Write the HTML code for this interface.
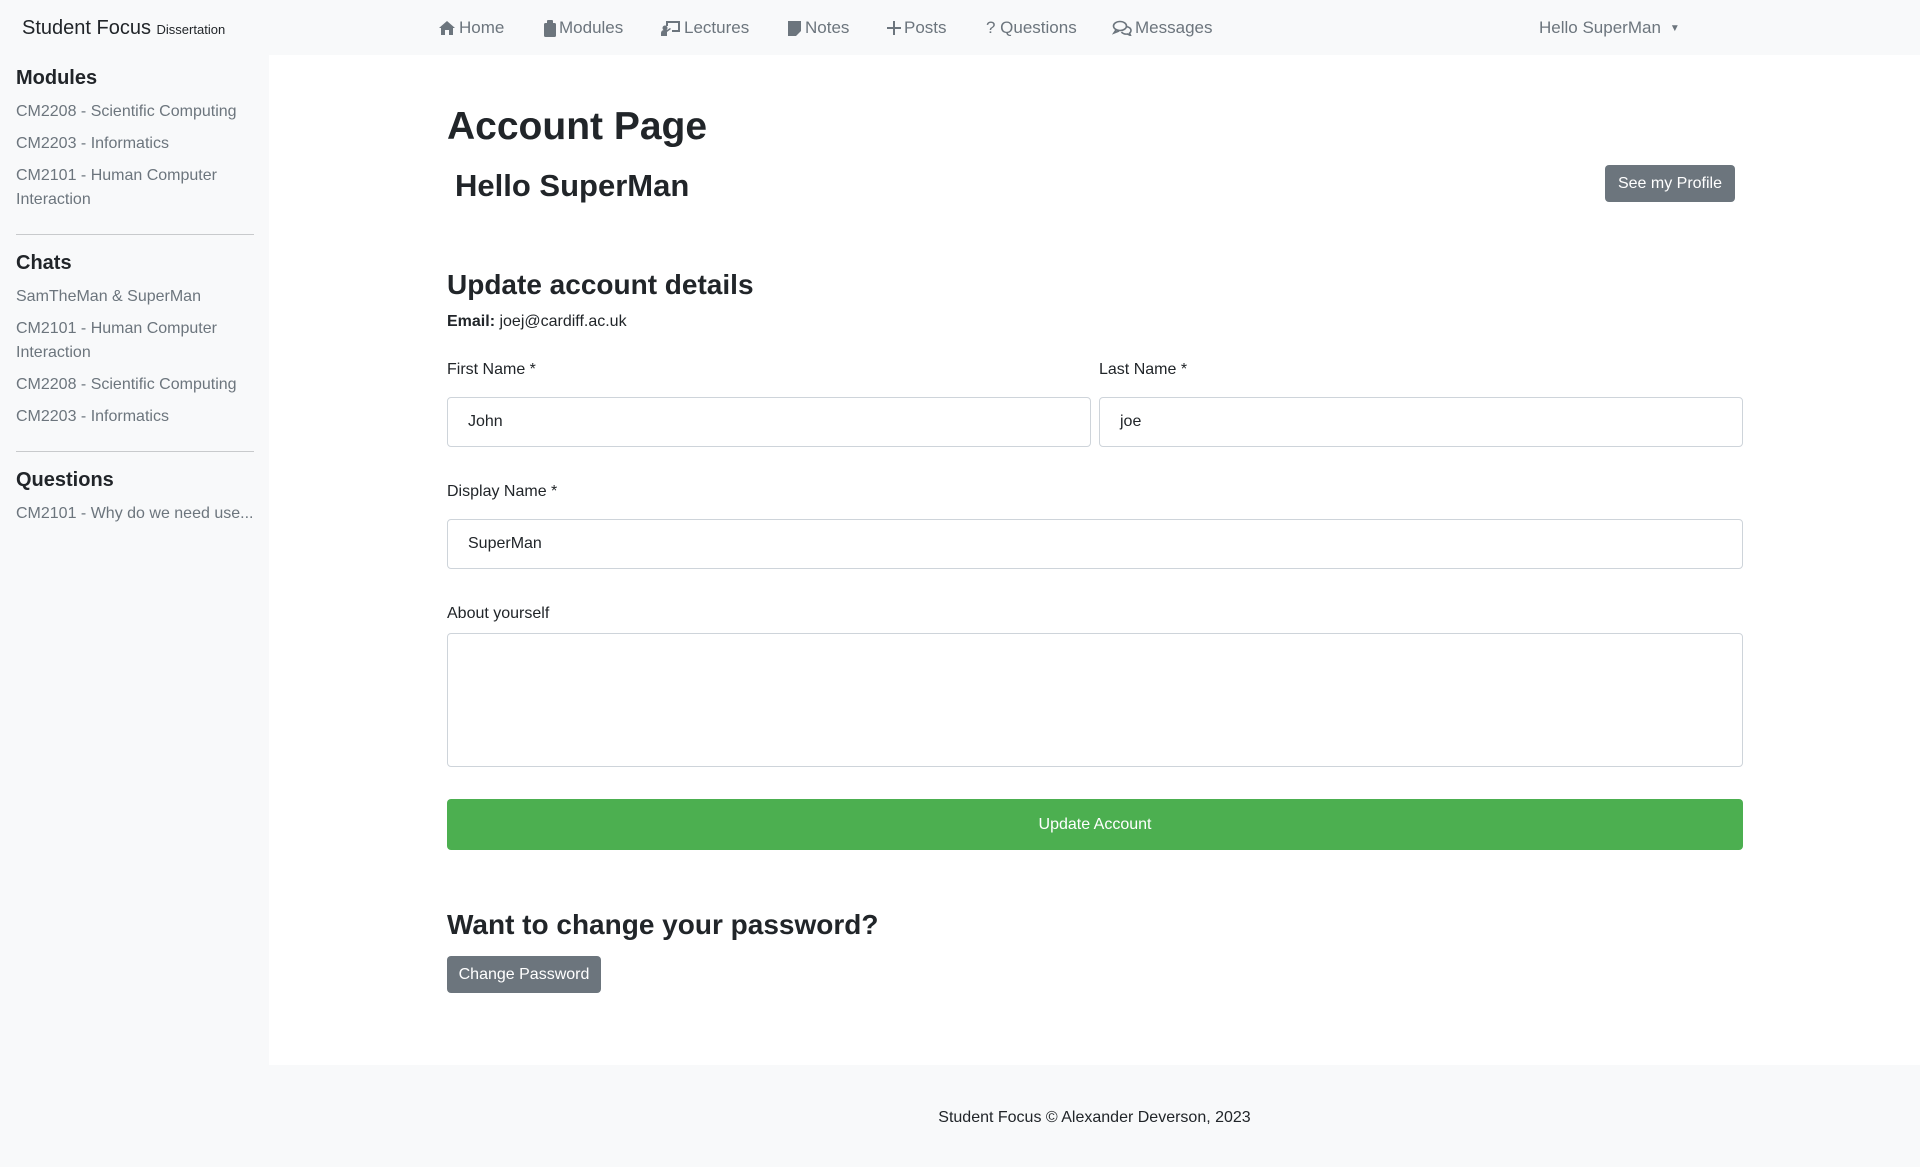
<!DOCTYPE html>
<html><head><meta charset="utf-8"><style>
*{box-sizing:border-box;margin:0;padding:0}
body{width:1920px;height:1167px;background:#f8f9fa;font-family:"Liberation Sans",sans-serif;color:#212529;position:relative;overflow:hidden}
.a{position:absolute;white-space:nowrap}
.nav{color:#6c757d;font-size:17px;top:18px;display:flex;align-items:center;gap:3px}
.nav svg{fill:#6c757d}
.sb{color:#6c757d;font-size:16px;left:16px;line-height:24px}
.sh{font-size:20px;font-weight:bold;left:16px;color:#212529}
.hr{position:absolute;left:16px;width:238px;height:1px;background:#c8cacc}
#main{position:absolute;left:269px;top:55px;width:1651px;height:1010px;background:#fff}
.lbl{font-size:16px;left:447px}
.inp{position:absolute;border:1px solid #ced4da;border-radius:4px;background:#fff;font-size:16px;padding-left:20px;display:flex;align-items:center}
.btn{position:absolute;background:#6c757d;color:#fff;border-radius:4px;font-size:16px;display:flex;align-items:center;justify-content:center}
.hd{font-weight:bold}
</style></head><body>
<div class="a" style="left:22px;top:17px;font-size:20px;color:#212529">Student Focus <span style="font-size:13px">Dissertation</span></div>
<div class="a nav" style="left:438px"><svg width="18" height="16" viewBox="0 0 18 16"><path d="M9 1L1 8h2v7h4v-5h4v5h4V8h2z"/></svg>Home</div>
<div class="a nav" style="left:544px"><svg width="12" height="17" viewBox="0 0 12 17"><rect x="0" y="3" width="12" height="14" rx="1.5"/><rect x="3" y="0" width="6" height="4" rx="1"/></svg>Modules</div>
<div class="a nav" style="left:661px"><svg width="20" height="16" viewBox="0 0 20 16"><path d="M5 1h14v11h-8v-2h6V3H7v3H5z"/><circle cx="4" cy="8" r="2.5"/><path d="M0 16v-3a3 3 0 013-3h3l3-2 1 1-4 3v4z"/></svg>Lectures</div>
<div class="a nav" style="left:787px"><svg width="15" height="16" viewBox="0 0 15 16"><path d="M1 1h13v10l-5 5H1z"/></svg>Notes</div>
<div class="a nav" style="left:887px"><svg width="14" height="14" viewBox="0 0 14 14"><path d="M6 0h2v6h6v2H8v6H6V8H0V6h6z"/></svg>Posts</div>
<div class="a nav" style="left:986px">? Questions</div>
<div class="a nav" style="left:1112px"><svg width="20" height="16" viewBox="0 0 20 16" fill="none" stroke="#6c757d" stroke-width="1.6" style="fill:none"><ellipse cx="8" cy="6" rx="6.5" ry="4.5"/><path d="M4 10l-2 3 5-2"/><path d="M14 6.5c3 .5 5 2 5 4 0 1.2-.6 2-1.5 2.7l1 2.3-3-1.5c-2.5.5-5-.5-6-2"/></svg>Messages</div>
<div class="a nav" style="left:1539px">Hello SuperMan <span style="font-size:10px;margin-left:6px">▼</span></div>

<div class="a sh" style="top:67px">Modules</div>
<div class="a sb" style="top:100px">CM2208 - Scientific Computing</div>
<div class="a sb" style="top:132px">CM2203 - Informatics</div>
<div class="a sb" style="top:164px">CM2101 - Human Computer<br>Interaction</div>
<div class="hr" style="top:234px"></div>
<div class="a sh" style="top:252px">Chats</div>
<div class="a sb" style="top:285px">SamTheMan &amp; SuperMan</div>
<div class="a sb" style="top:317px">CM2101 - Human Computer<br>Interaction</div>
<div class="a sb" style="top:373px">CM2208 - Scientific Computing</div>
<div class="a sb" style="top:405px">CM2203 - Informatics</div>
<div class="hr" style="top:451px"></div>
<div class="a sh" style="top:469px">Questions</div>
<div class="a sb" style="top:502px">CM2101 - Why do we need use...</div>

<div id="main"></div>
<div class="a hd" style="left:447px;top:105px;font-size:39px">Account Page</div>
<div class="a hd" style="left:455px;top:168px;font-size:31px">Hello SuperMan</div>
<div class="btn" style="left:1605px;top:165px;width:130px;height:37px">See my Profile</div>
<div class="a hd" style="left:447px;top:269px;font-size:28px">Update account details</div>
<div class="a" style="left:447px;top:313px;font-size:16px"><b>Email:</b> joej@cardiff.ac.uk</div>
<div class="a lbl" style="top:361px">First Name *</div>
<div class="a lbl" style="top:361px;left:1099px">Last Name *</div>
<div class="inp" style="left:447px;top:397px;width:644px;height:50px">John</div>
<div class="inp" style="left:1099px;top:397px;width:644px;height:50px">joe</div>
<div class="a lbl" style="top:483px">Display Name *</div>
<div class="inp" style="left:447px;top:519px;width:1296px;height:50px">SuperMan</div>
<div class="a lbl" style="top:605px">About yourself</div>
<div class="inp" style="left:447px;top:633px;width:1296px;height:134px"></div>
<div class="btn" style="left:447px;top:799px;width:1296px;height:51px;background:#4caf50">Update Account</div>
<div class="a hd" style="left:447px;top:909px;font-size:28px">Want to change your password?</div>
<div class="btn" style="left:447px;top:956px;width:154px;height:37px">Change Password</div>
<div class="a" style="left:0;width:2189px;text-align:center;top:1109px;font-size:16px">Student Focus © Alexander Deverson, 2023</div>
</body></html>
